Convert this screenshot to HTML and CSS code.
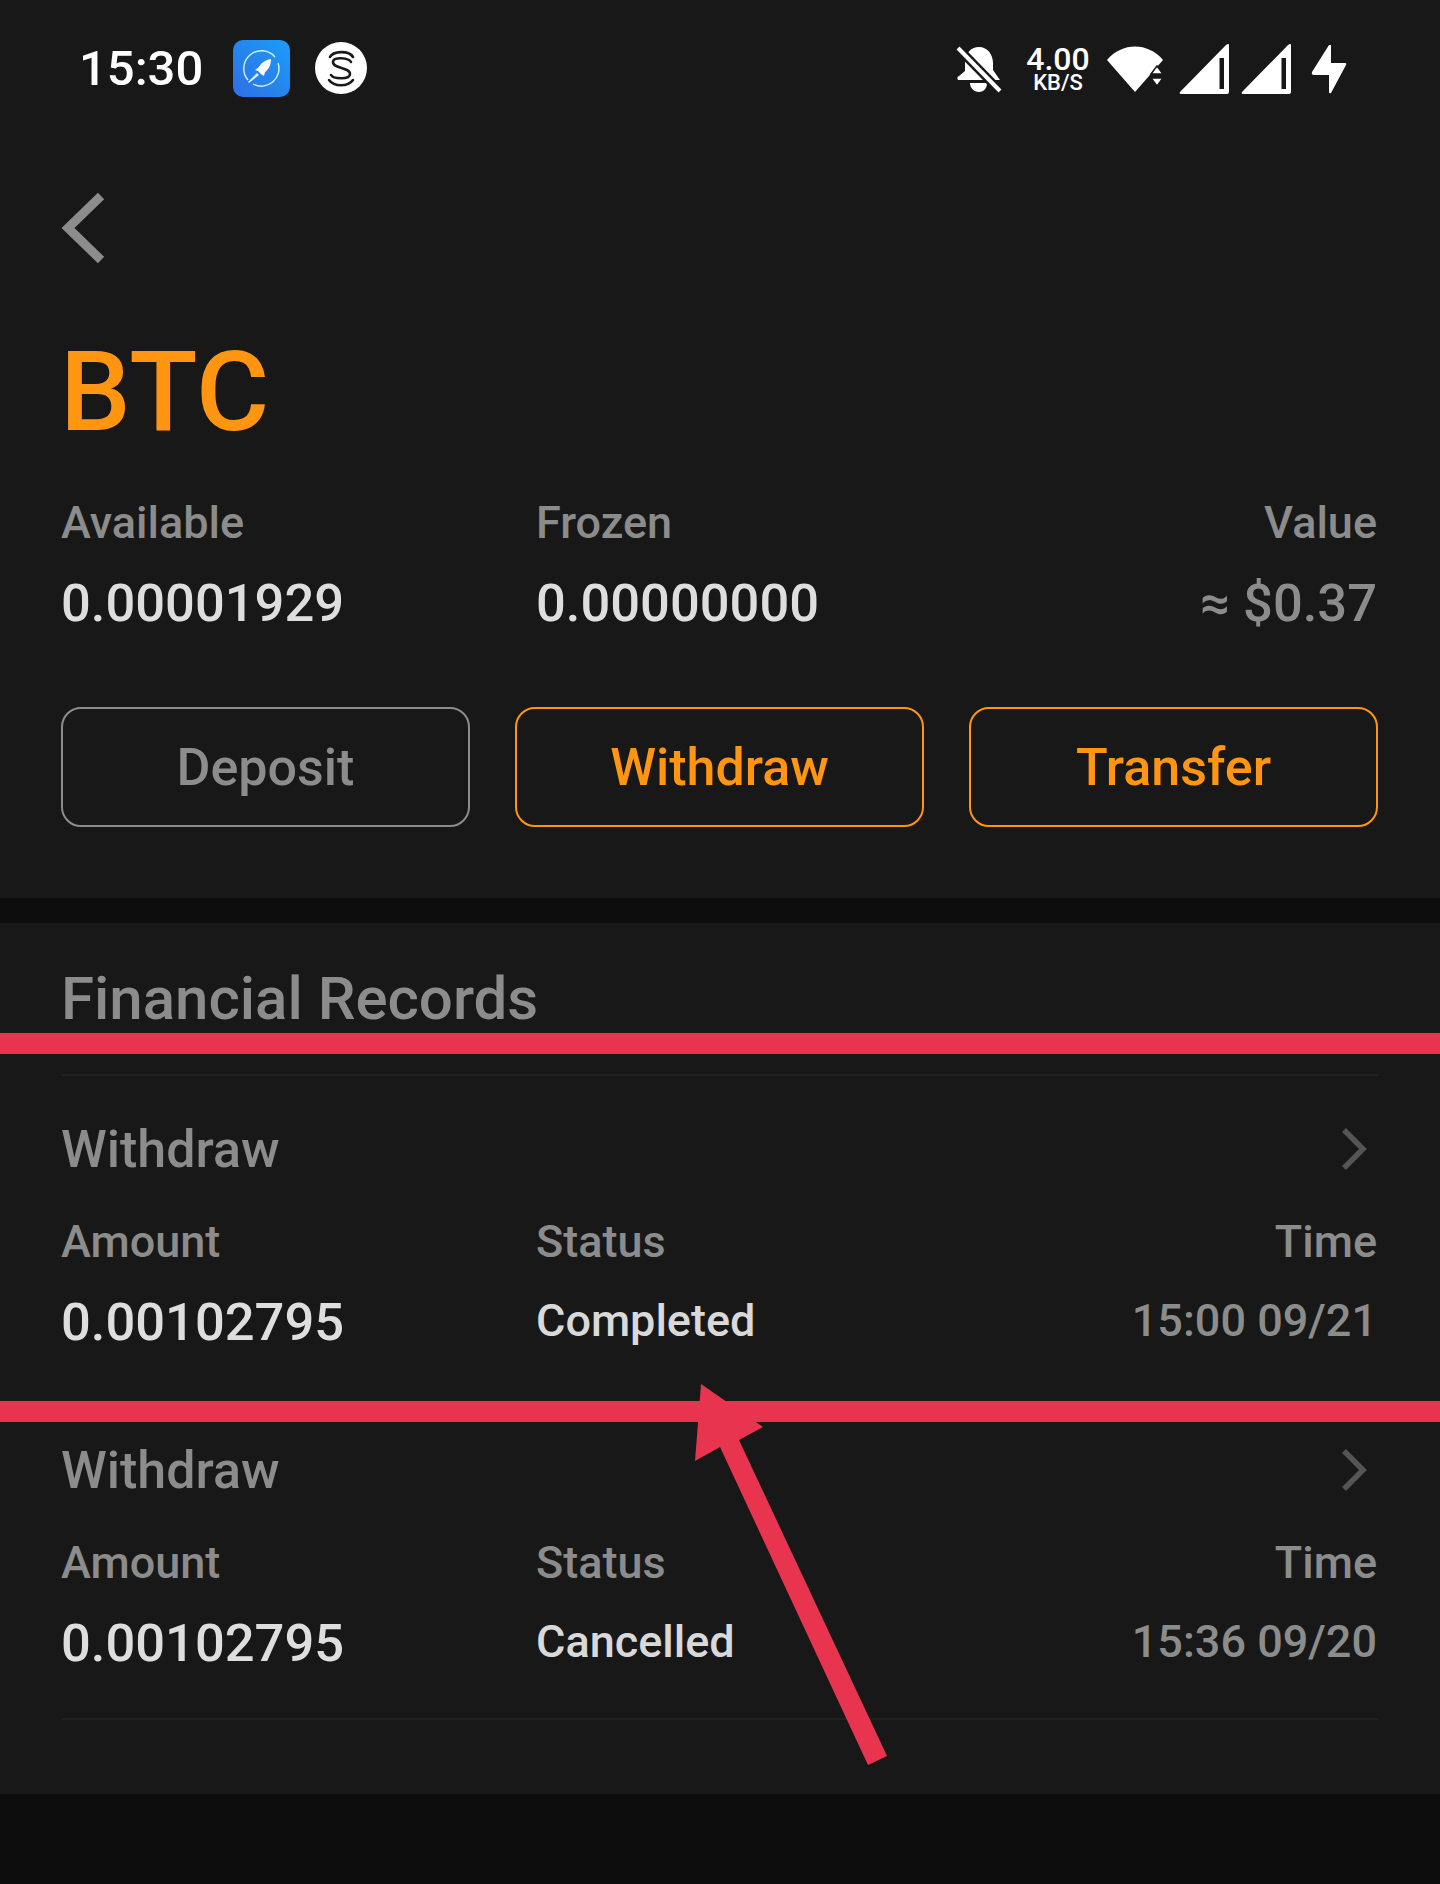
FILE: index.html
```html
<!DOCTYPE html>
<html lang="en">

<head>
    <meta charset="UTF-8">
    <title>BTC</title>
    <link rel="stylesheet" href="styles.css">
</head>

<body>
    <div class="page">
        <!-- Status bar -->
        <div class="status-bar">
            <div class="status-left">
                <span class="clock">15:30</span>
                <svg class="app-rocket" viewBox="0 0 57 57">
                    <defs>
                        <linearGradient id="rocket-bg" x1="0" y1="1" x2="1" y2="0">
                            <stop offset="0" stop-color="#2f6fe4"/>
                            <stop offset="1" stop-color="#1a9df7"/>
                        </linearGradient>
                    </defs>
                    <rect width="57" height="57" rx="10" fill="url(#rocket-bg)"/>
                    <path d="M15 40A17.5 17.5 0 0 1 42 17M45 23A17.5 17.5 0 0 1 20 44" fill="none" stroke="#d8f0ff" stroke-width="1.4"/>
                    <path d="M38 19C38 26 35 30 32 32L31 36L28 34L25 31L22 30L26 27C28 23 32 20 38 19Z" fill="#fff"/>
                    <path d="M24 33L15 42L16 43L26 35Z" fill="#d8f0ff"/>
                </svg>
                <svg class="app-sweat" viewBox="0 0 52 52">
                    <circle cx="26" cy="26" r="26" fill="#fff"/>
                    <path d="M15 15C18 9 34 8 38 15M36 20C34 16 18 14 18 20C18 27 35 25 35 32C35 38 18 37 16 33M14 38C19 45 33 45 38 38" fill="none" stroke="#1a1a1a" stroke-width="2.6" stroke-linecap="round"/>
                </svg>
            </div>
            <div class="status-right">
                <svg class="ic-bell" viewBox="0 0 47 47">
                    <path d="M23 1C32 1 37 9 37 17V24L44 34H2C1 32 1 31 3 30L9 25V15C10 7 15 1 23 1Z" fill="#fff"/>
                    <path d="M14 37H31C31 43 27 46 23 46C19 46 14 43 14 37Z" fill="#fff"/>
                    <path d="M2 2L44 45" stroke="#181818" stroke-width="9"/>
                    <path d="M2 2L44 45" stroke="#fff" stroke-width="4"/>
                </svg>
                <div class="speed">
                    <span class="speed-num">4.00</span>
                    <span class="speed-unit">KB/S</span>
                </div>
                <svg class="ic-wifi" viewBox="0 0 56 46">
                    <path d="M0 14C15 -4 41 -4 56 14L28 46Z" fill="#fff"/>
                    <path d="M44 28L50 20L56 28ZM44 32H56L50 40Z" fill="#fff" stroke="#181818" stroke-width="1.5"/>
                </svg>
                <svg class="ic-signal first-signal" viewBox="0 0 50 50">
                    <path fill-rule="evenodd" d="M50 1V48Q50 50 48 50H2Q0 50 1 48L47 1Q50 -1 50 1ZM40.5 14V45H45V14Z" fill="#fff"/>
                </svg>
                <svg class="ic-signal" viewBox="0 0 50 50">
                    <path fill-rule="evenodd" d="M50 1V48Q50 50 48 50H2Q0 50 1 48L47 1Q50 -1 50 1ZM40.5 14V45H45V14Z" fill="#fff"/>
                </svg>
                <svg class="ic-bolt" viewBox="0 0 36 49">
                    <path d="M18 0H20V18H34Q36 18 35 20L20 48Q18 49 18 47V30H2Q0 29 1 27Z" fill="#fff"/>
                </svg>
            </div>
        </div>

        <!-- Coin summary -->
        <div class="coin">
            <svg class="back-arrow" viewBox="0 0 44 72">
                <path d="M40 4L7 36L40 68" fill="none" stroke="#8c8c8c" stroke-width="9"/>
            </svg>
            <h1 class="coin-name">BTC</h1>
            <div class="info-row">
                <div>
                    <p class="label">Available</p>
                    <p class="value">0.00001929</p>
                </div>
                <div>
                    <p class="label">Frozen</p>
                    <p class="value">0.00000000</p>
                </div>
                <div class="right">
                    <p class="label">Value</p>
                    <p class="value muted">≈ $0.37</p>
                </div>
            </div>
            <div class="buttons">
                <div class="btn disabled">Deposit</div>
                <div class="btn">Withdraw</div>
                <div class="btn">Transfer</div>
            </div>
        </div>

        <div class="band"></div>

        <!-- Financial records -->
        <div class="records">
            <h2>Financial Records</h2>

            <div class="record first">
                <div class="record-head">
                    <span>Withdraw</span>
                    <svg class="chevron" viewBox="0 0 26 44">
                        <path d="M3 3L22 22L3 41" fill="none" stroke="#555" stroke-width="5.5"/>
                    </svg>
                </div>
                <div class="info-row">
                    <div>
                        <p class="label">Amount</p>
                        <p class="value">0.00102795</p>
                    </div>
                    <div>
                        <p class="label">Status</p>
                        <p class="value status">Completed</p>
                    </div>
                    <div class="right">
                        <p class="label">Time</p>
                        <p class="value time">15:00 09/21</p>
                    </div>
                </div>
            </div>

            <div class="record">
                <div class="record-head">
                    <span>Withdraw</span>
                    <svg class="chevron" viewBox="0 0 26 44">
                        <path d="M3 3L22 22L3 41" fill="none" stroke="#555" stroke-width="5.5"/>
                    </svg>
                </div>
                <div class="info-row">
                    <div>
                        <p class="label">Amount</p>
                        <p class="value">0.00102795</p>
                    </div>
                    <div>
                        <p class="label">Status</p>
                        <p class="value status">Cancelled</p>
                    </div>
                    <div class="right">
                        <p class="label">Time</p>
                        <p class="value time">15:36 09/20</p>
                    </div>
                </div>
            </div>
        </div>

        <!-- Red marks drawn over the screenshot -->
        <div class="mark-line line-one"></div>
        <div class="mark-line line-two"></div>
        <svg class="mark-arrow" viewBox="0 0 1440 1884">
            <path d="M701 1384L763 1427L739 1440L887 1756L868 1765L720 1447L695 1461Z" fill="#e9344f"/>
        </svg>
    </div>
</body>

</html>
```

FILE: styles.css
```css
body {
    margin: 0;
    background-color: #0d0d0d;
    font-family: 'Roboto', sans-serif;
}

p,
h1,
h2 {
    margin: 0;
    font-weight: 500;
}

.page {
    position: relative;
    width: 1440px;
    height: 1884px;
    overflow: hidden;
}

/* Status bar */
.status-bar {
    height: 136px;
    padding: 0 93px 0 79px;
    display: flex;
    justify-content: space-between;
    align-items: center;
    background-color: #181818;
}

.status-left,
.status-right {
    display: flex;
    align-items: center;
}

.status-right {
    margin-top: 2px;
}

.clock {
    margin-top: 2px;
    font-size: 49px;
    line-height: 56px;
    font-weight: 500;
    color: #fff;
}

.app-rocket {
    width: 57px;
    height: 57px;
    margin-left: 30px;
}

.app-sweat {
    width: 52px;
    height: 52px;
    margin-left: 25px;
}

.ic-bell {
    width: 47px;
    height: 47px;
}

.speed {
    margin-left: 23px;
    width: 64px;
    display: flex;
    flex-direction: column;
    align-items: center;
    color: #fff;
    font-weight: 500;
}

.speed-num {
    font-size: 32px;
    line-height: 27px;
}

.speed-unit {
    font-size: 22px;
    line-height: 20px;
}

.ic-wifi {
    width: 56px;
    height: 46px;
    margin-left: 17px;
}

.ic-signal {
    width: 50px;
    height: 50px;
    margin-left: 12px;
}

.first-signal {
    margin-left: 16px;
}

.ic-bolt {
    width: 36px;
    height: 49px;
    margin-left: 20px;
}

/* Coin summary */
.coin {
    padding: 56px 61px 71px;
    background-color: #181818;
}

.back-arrow {
    display: block;
    width: 44px;
    height: 72px;
}

.coin-name {
    margin-top: 74px;
    margin-left: -1px;
    font-size: 112px;
    line-height: 108px;
    color: #ff9510;
}

.info-row {
    display: grid;
    grid-template-columns: 475px 1fr auto;
    margin-right: 2px;
}

.coin .info-row {
    margin-top: 53px;
}

.right {
    text-align: right;
}

.label {
    font-size: 45px;
    line-height: 48px;
    color: #8c8c8c;
}

.value {
    margin-top: 26px;
    font-size: 52.5px;
    line-height: 60px;
    color: #dedede;
}

.value.muted {
    color: #8c8c8c;
}

.value.status {
    margin-top: 25px;
    font-size: 45px;
    color: #d9d9d9;
}

.value.time {
    margin-top: 25px;
    font-size: 45px;
    color: #8c8c8c;
}

.buttons {
    display: flex;
    gap: 45px;
    margin-top: 74px;
}

.btn {
    box-sizing: border-box;
    width: 409px;
    height: 120px;
    display: flex;
    justify-content: center;
    align-items: center;
    border: 2px solid #ff9510;
    border-radius: 20px;
    font-size: 52px;
    font-weight: 500;
    color: #ff9510;
}

.btn.disabled {
    border-color: #8c8c8c;
    color: #8c8c8c;
}

.band {
    height: 25px;
    background-color: #0d0d0d;
}

/* Financial records */
.records {
    height: 871px;
    box-sizing: border-box;
    padding: 44px 61px 0;
    background-color: #181818;
}

.records h2 {
    font-size: 60px;
    line-height: 64px;
    color: #8c8c8c;
}

.record {
    padding: 45px 0 45px;
    border-bottom: 2px solid #212121;
}

.record.first {
    margin-top: 43px;
    border-top: 2px solid #212121;
    border-bottom: none;
}

.record-head {
    display: flex;
    justify-content: space-between;
    align-items: center;
    height: 56px;
    margin-bottom: 41px;
    font-size: 52px;
    font-weight: 500;
    color: #8c8c8c;
}

.chevron {
    width: 26px;
    height: 44px;
    margin-right: 12px;
}

/* Red marks */
.mark-line {
    position: absolute;
    left: 0;
    right: 0;
    height: 21px;
    background-color: #e9344f;
}

.line-one {
    top: 1033px;
}

.line-two {
    top: 1401px;
}

.mark-arrow {
    position: absolute;
    top: 0;
    left: 0;
    width: 1440px;
    height: 1884px;
}
```
